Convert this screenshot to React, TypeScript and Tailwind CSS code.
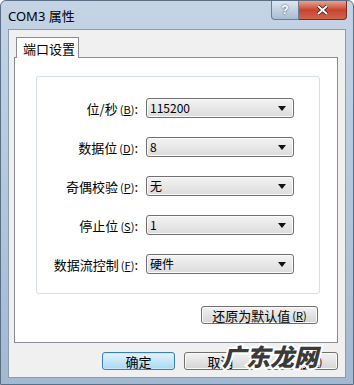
import React from 'react';

const font = "font-['SimSun','Noto_Sans_CJK_SC',sans-serif]";

const rows = [
  { label: '位/秒', key: 'B', value: '115200' },
  { label: '数据位', key: 'D', value: '8' },
  { label: '奇偶校验', key: 'P', value: '无' },
  { label: '停止位', key: 'S', value: '1' },
  { label: '数据流控制', key: 'F', value: '硬件' },
];

function Combo({ value }: { value: string }) {
  return (
    <div className="w-[148px] h-[20px] rounded-[3px] border border-[#707070] bg-gradient-to-b from-[#f3f3f3] to-[#dcdcdc] flex items-center pl-[3px] pr-[7px] shadow-[inset_0_0_0_1px_#fbfbfb]">
      <span className="flex-1 text-[12px] leading-none text-black">{value}</span>
      <svg width="8" height="5" viewBox="0 0 8 5">
        <path d="M0 0h8L4 5z" fill="#111" />
      </svg>
    </div>
  );
}

function Btn({ children, className = '', primary = false }: { children: React.ReactNode; className?: string; primary?: boolean }) {
  return (
    <div
      className={
        'h-[18px] rounded-[3px] border flex items-center justify-center text-[12px] leading-none text-black ' +
        (primary
          ? 'border-[#3c7fb1] bg-gradient-to-b from-[#e5f4fc] to-[#a7d9f5] shadow-[inset_0_0_0_1px_#c8e8fa]'
          : 'border-[#707070] bg-gradient-to-b from-[#f2f2f2] to-[#d5d5d5] shadow-[inset_0_0_0_1px_#fafafa]') +
        ' ' +
        className
      }
    >
      {children}
    </div>
  );
}

export default function App() {
  return (
    <div className={`relative w-[354px] h-[385px] overflow-hidden rounded-t-[6px] border border-[#5a6f86] bg-gradient-to-b from-[#c4d4e5] via-[#b3c7dc] to-[#a3b9d1] ${font}`}>
      {/* title bar */}
      <div className="h-[28px] flex items-start">
        <span className="pl-[7px] pt-[6px] text-[13px] text-black font-['Noto_Sans','Noto_Sans_CJK_SC',sans-serif]">COM3 属性</span>
        <div className="ml-auto mr-[6px] flex">
          <div className="w-[28px] h-[19px] rounded-bl-[4px] border border-t-0 border-[#6b7f94] bg-gradient-to-b from-[#dbe6f1] to-[#a8bdd3] flex items-center justify-center text-white text-[12px] font-bold font-['Liberation_Sans',sans-serif] [text-shadow:0_0_2px_#334]">
            ?
          </div>
          <div className="w-[48px] h-[19px] rounded-br-[4px] border border-t-0 border-l-0 border-[#7a2a22] bg-gradient-to-b from-[#e8a293] via-[#c7432e] to-[#d0654d] flex items-center justify-center">
            <svg width="13" height="10" viewBox="0 0 13 10">
              <path d="M2 1l9 8M11 1l-9 8" stroke="#3a1510" strokeWidth="3.4" />
              <path d="M2 1l9 8M11 1l-9 8" stroke="#fff" strokeWidth="2" />
            </svg>
          </div>
        </div>
      </div>

      {/* dialog body */}
      <div className="mx-[7px] h-[349px] border border-[#8b9cae] bg-[#f0f0f0] pl-[5px] pr-[7px] pt-[7px]">
        <div className="flex">
          <div className="ml-[2px] w-[63px] h-[21px] border border-b-0 border-[#898c95] bg-white flex items-center pl-[6px] text-[13px] leading-none -mb-px relative z-10">
            端口设置
          </div>
        </div>
        <div className="h-[286px] border border-[#898c95] bg-white pt-[18px] pl-[21px] pr-[17px]">
          <div className="h-[218px] rounded-[3px] border border-[#d5dfe5] pt-[21px] flex flex-col gap-[19px]">
            {rows.map((r) => (
              <div key={r.key} className="flex items-center h-[20px]">
                <div className="w-[101px] text-right text-[13px] leading-none text-black whitespace-nowrap">
                  {r.label}
                  <span className="text-[11px] ml-[2px]">
                    (<span className="underline">{r.key}</span>)
                  </span>
                  :
                </div>
                <div className="ml-[8px]">
                  <Combo value={r.value} />
                </div>
              </div>
            ))}
          </div>
          <div className="flex justify-end mt-[12px] pr-[2px]">
            <Btn className="w-[117px] h-[17px] text-[13px]">
              还原为默认值<span className="text-[11px] ml-[2px]">(<span className="underline">R</span>)</span>
            </Btn>
          </div>
        </div>
        <div className="flex justify-end gap-[9px] mt-[9px]">
          <Btn primary className="w-[73px] text-[13px]">确定</Btn>
          <Btn className="w-[73px] text-[13px]">取消</Btn>
          <Btn className="w-[72px] text-[13px]">
            应用<span className="text-[11px] ml-[1px]">(<span className="underline">A</span>)</span>
          </Btn>
        </div>
      </div>

      {/* watermark */}
      <div className="absolute left-[221px] top-[343px] text-[24px] font-black italic leading-none text-[#3a3a3a] [-webkit-text-stroke:4px_white] [paint-order:stroke_fill] font-['Noto_Sans_CJK_SC',sans-serif]">
        广东龙网
      </div>
    </div>
  );
}
